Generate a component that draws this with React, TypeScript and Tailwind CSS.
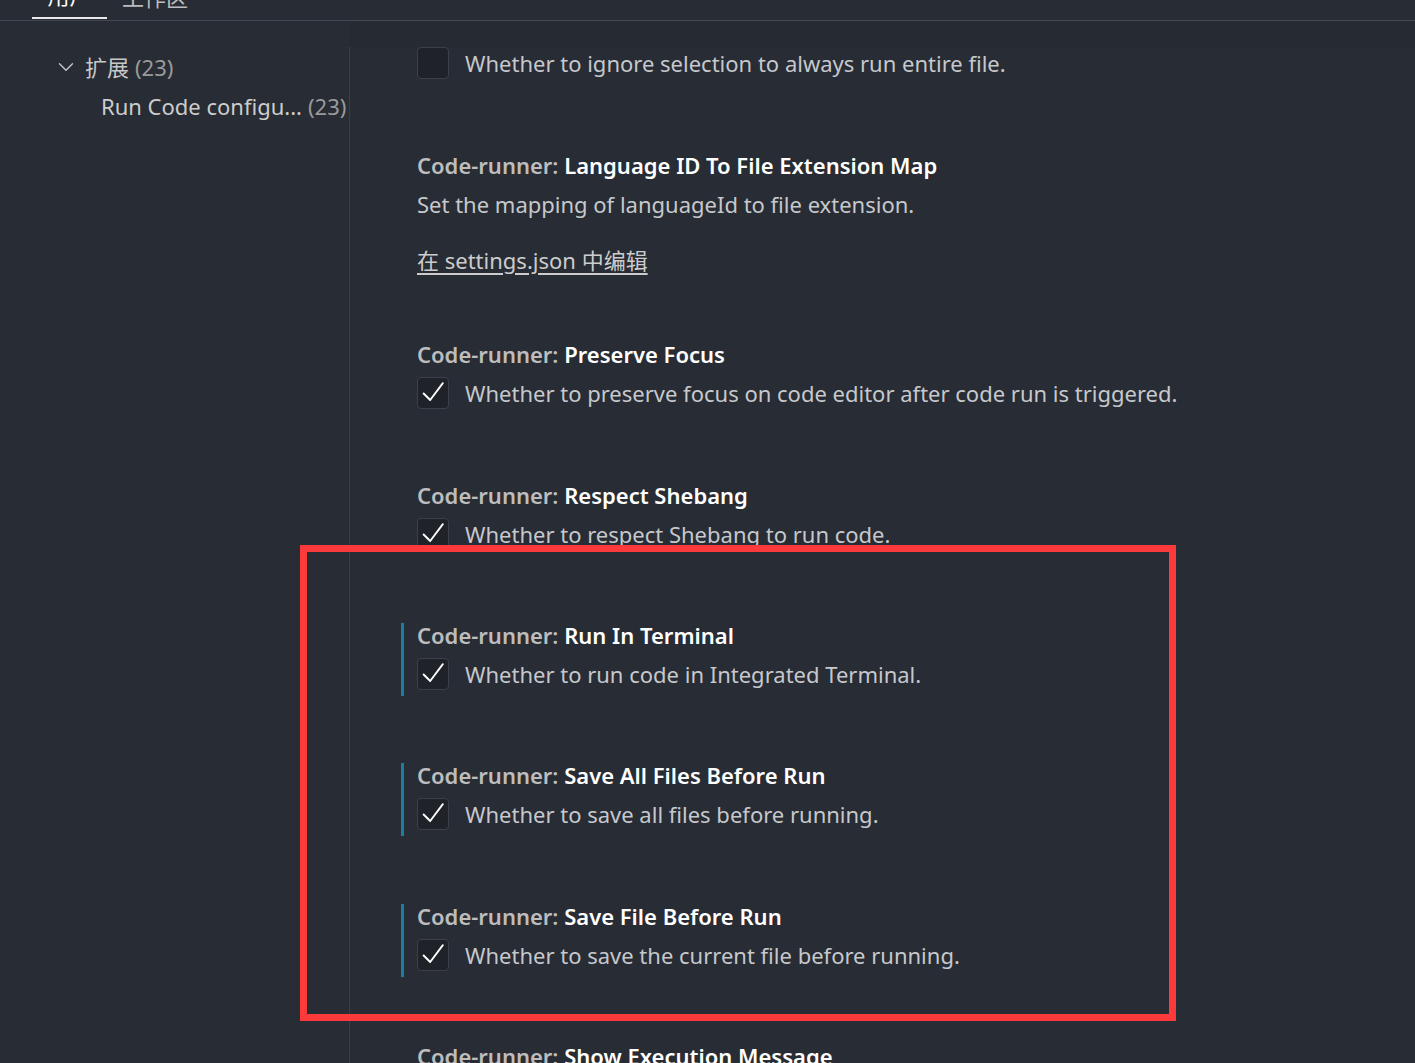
import { ChevronDown } from "lucide-react";

const font = {
  fontFamily: '"Noto Sans", "Noto Sans CJK SC", sans-serif',
};

function Check({ checked }: { checked: boolean }) {
  return (
    <div className="w-8 h-8 shrink-0 rounded-[4px] border border-[#3c404b] bg-[#1f2228] flex items-center justify-center">
      {checked && (
        <svg width="32" height="32" viewBox="0 0 32 32" fill="none">
          <path
            d="M6 16.5 L13 23.5 L26.5 5.5"
            stroke="#ffffff"
            strokeWidth="2"
            strokeLinecap="round"
            strokeLinejoin="round"
          />
        </svg>
      )}
    </div>
  );
}

function Title({ name }: { name: string }) {
  return (
    <div className="h-6 leading-6 text-[22px] whitespace-nowrap">
      <span className="font-semibold text-[#bdbdbd]">Code-runner: </span>
      <span className="font-semibold text-white">{name}</span>
    </div>
  );
}

function Row({ checked, text }: { checked: boolean; text: string }) {
  return (
    <div className="flex items-center gap-4 h-8">
      <Check checked={checked} />
      <span className="text-[22px] text-[#c6c8cc] whitespace-nowrap">{text}</span>
    </div>
  );
}

function Setting({
  name,
  text,
  focused,
  className,
}: {
  name: string;
  text: string;
  focused?: boolean;
  className?: string;
}) {
  return (
    <div
      className={`border-l-[3px] pl-[13px] pb-[6px] ${
        focused ? "border-[#1b7fa3]" : "border-transparent"
      } ${className ?? ""}`}
    >
      <Title name={name} />
      <div className="mt-[11px]">
        <Row checked text={text} />
      </div>
    </div>
  );
}

export default function App() {
  return (
    <div className="w-[1415px] h-[1063px] overflow-hidden bg-[#282c34] relative" style={font}>
      {/* tab header */}
      <div className="h-[21px] border-b border-[#434756] relative overflow-hidden">
        <div className="flex items-end h-[21px] pl-[32px] -mt-[2px]">
          <div className="w-[75px] h-[21px] flex justify-center items-end border-b-2 border-[#e8e8e8]">
            <span className="text-[22px] leading-[22px] text-white translate-y-[-11px]">用户</span>
          </div>
          <div className="ml-[15px] h-[21px] flex items-end">
            <span className="text-[22px] leading-[22px] text-[#bcbcbc] translate-y-[-11px]">工作区</span>
          </div>
        </div>
      </div>

      <div className="flex">
        {/* sidebar */}
        <div className="w-[349px] shrink-0 pt-[26px]">
          <div className="flex items-center h-[40px] pl-[53px]">
            <ChevronDown size={26} strokeWidth={1.3} className="text-[#c5c5c5]" />
            <span className="ml-[6px] text-[22px] text-[#c8c8c8]">扩展</span>
            <span className="ml-[6px] text-[22px] text-[#9a9a9a]">(23)</span>
          </div>
          <div className="flex items-center h-[38px] pl-[101px] whitespace-nowrap">
            <span className="text-[22px] text-[#cccccc]">Run Code configu...</span>
            <span className="ml-[6px] text-[22px] text-[#9a9a9a]">(23)</span>
          </div>
        </div>

        {/* content */}
        <div className="flex-1 flex flex-col">
          <div className="h-[26px] bg-[#262a31]" />
          <div className="flex-1 border-l border-[#3a3e48] bg-[#282c34] pl-[51px]">
            <div className="pl-[13px] pb-[6px] border-l-[3px] border-transparent">
              <Row checked={false} text="Whether to ignore selection to always run entire file." />
            </div>

            <div className="mt-[68px] border-l-[3px] border-transparent pl-[13px] pb-[6px]">
              <Title name="Language ID To File Extension Map" />
              <div className="mt-[15px] h-6 leading-6 text-[22px] text-[#c6c8cc] whitespace-nowrap">
                Set the mapping of languageId to file extension.
              </div>
              <div className="mt-[32px] h-6 leading-6 text-[22px] text-[#cccccc] underline underline-offset-[4px] whitespace-nowrap">
                在 settings.json 中编辑
              </div>
            </div>

            <Setting
              className="mt-[64px]"
              name="Preserve Focus"
              text="Whether to preserve focus on code editor after code run is triggered."
            />
            <Setting
              className="mt-[68px]"
              name="Respect Shebang"
              text="Whether to respect Shebang to run code."
            />
            <Setting
              className="mt-[67px]"
              focused
              name="Run In Terminal"
              text="Whether to run code in Integrated Terminal."
            />
            <Setting
              className="mt-[67px]"
              focused
              name="Save All Files Before Run"
              text="Whether to save all files before running."
            />
            <Setting
              className="mt-[68px]"
              focused
              name="Save File Before Run"
              text="Whether to save the current file before running."
            />
            <Setting
              className="mt-[67px]"
              name="Show Execution Message"
              text="Whether to show extra execution message like [Running] ... and [Done] ..."
            />
          </div>
        </div>
      </div>

      {/* annotation box */}
      <div className="absolute left-[300px] top-[545px] w-[876px] h-[476px] border-[7px] border-[#fc3a3c] pointer-events-none" />
    </div>
  );
}
